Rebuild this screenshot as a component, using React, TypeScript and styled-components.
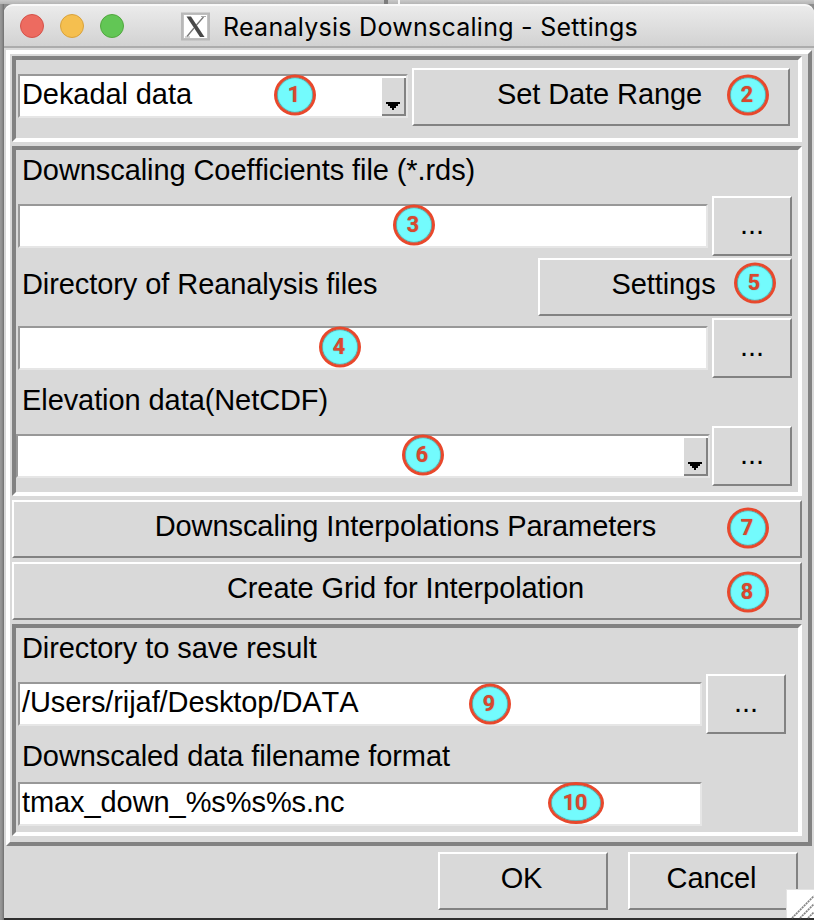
import React from "react";
import styled, { createGlobalStyle, css } from "styled-components";

const GlobalStyle = createGlobalStyle`
  * { box-sizing: border-box; }
  html, body { margin: 0; padding: 0; background: #8d8d8d; overflow: hidden; }
`;

const Desktop = styled.div`
  width: 814px;
  height: 920px;
  padding: 4px 0 0 4px;
  overflow: hidden;
  background:
    linear-gradient(#7d7d7d, #7d7d7d) 384px 0 / 4px 4px no-repeat,
    linear-gradient(#f6f6f6, #f6f6f6) 398px 0 / 2px 4px no-repeat,
    linear-gradient(#c9c9c9, #b4b4b4) 0 0 / 814px 4px no-repeat,
    linear-gradient(#2e2e2e, #2e2e2e) 4px 918px / 810px 2px no-repeat,
    linear-gradient(90deg, #999 0, #8e8e8e 2px, #6f6f6f 4px) 0 0 / 4px 920px no-repeat;
  font-family: "Liberation Sans", Arial, Helvetica, sans-serif;
  font-size: 29px;
  font-kerning: none;
  letter-spacing: -0.08px;
  line-height: 40px;
  color: #000;
`;

const Window = styled.div`
  position: relative;
  width: 810px;
  height: 914px;
  background: #d9d9d9;
  border-radius: 9px 9px 0 0;
`;

const TitleBar = styled.header`
  display: flex;
  align-items: center;
  height: 44px;
  padding-left: 16px;
  border-radius: 9px 9px 0 0;
  border-top: 2px solid #f8f8f8;
  border-bottom: 2px solid #acacac;
  background: linear-gradient(#ebebeb, #d2d2d2);
`;

const Lights = styled.div`
  display: flex;
  gap: 16px;
  width: 161px;
`;

const Light = styled.span<{ $fill: string; $edge: string }>`
  width: 24px;
  height: 24px;
  border-radius: 50%;
  background: ${(p) => p.$fill};
  border: 1.5px solid ${(p) => p.$edge};
`;

const Title = styled.h1`
  margin: 2px 0 0 13px;
  font: 400 25px/40px Inter, sans-serif;
  font-kerning: normal;
  letter-spacing: 0.27px;
  white-space: nowrap;
`;

const raised = css`
  border: solid;
  border-color: #fff #828282 #828282 #fff;
`;

const MainFrame = styled.main`
  ${raised}
  border-width: 4px;
  width: 806px;
  height: 796px;
  margin: 2px 2px 0;
  padding: 2px 6px 6px 2px;
  display: flex;
  flex-direction: column;
  gap: 4px;
`;

const Group = styled.section<{ $height: number }>`
  height: ${(p) => p.$height}px;
  border: 4px solid;
  border-color: #828282 #fff #fff #828282;
`;

const Row = styled.div<{ $top?: number; $indent?: number; $gap?: number }>`
  display: flex;
  align-items: flex-start;
  margin-top: ${(p) => p.$top ?? 0}px;
  padding-left: ${(p) => p.$indent ?? 2}px;
  gap: ${(p) => p.$gap ?? 4}px;
`;

const Label = styled.div<{ $top?: number; $width?: number }>`
  height: 40px;
  width: ${(p) => (p.$width ? `${p.$width}px` : "auto")};
  margin-top: ${(p) => p.$top ?? 0}px;
  padding-left: 6px;
  white-space: nowrap;
`;

const InlineLabel = styled(Label)`
  padding-left: 4px;
  margin-top: 6px;
`;

const Entry = styled.div<{ $width: number; $top?: number }>`
  position: relative;
  display: flex;
  justify-content: space-between;
  width: ${(p) => p.$width}px;
  height: 44px;
  margin-top: ${(p) => p.$top ?? 8}px;
  padding-left: 2px;
  border: 2px solid;
  border-color: #989898 #e6e6e6 #e6e6e6 #989898;
  background: #fff;
  line-height: 36px;
  white-space: nowrap;
`;

const ComboArrow = styled.span`
  width: 24px;
  height: 38px;
  margin-top: 2px;
  border-right: 2px solid #828282;
  border-bottom: 2px solid #828282;
  background: #d9d9d9;
  display: flex;
  align-items: flex-end;
  padding: 0 0 4px 4px;
`;

const Button = styled.button<{ $width?: number; $height?: number }>`
  ${raised}
  border-width: 2px;
  position: relative;
  flex: none;
  width: ${(p) => (p.$width ? `${p.$width}px` : "100%")};
  height: ${(p) => p.$height ?? 58}px;
  margin: 0;
  padding: ${(p) => (p.$height === 60 ? "0 0 4px" : "0 3px 6px 0")};
  background: #d9d9d9;
  color: inherit;
  font: inherit;
  font-kerning: none;
  letter-spacing: inherit;
  white-space: nowrap;
`;

const Marker = styled.span<{ $x: number; $y: number; $wide?: boolean }>`
  position: absolute;
  left: ${(p) => p.$x}px;
  top: ${(p) => p.$y}px;
  transform: translate(-50%, -50%);
  display: flex;
  align-items: center;
  justify-content: center;
  width: ${(p) => (p.$wide ? 56 : 42)}px;
  height: ${(p) => (p.$wide ? 42 : 41)}px;
  padding: 0 2px 1px 0;
  border: 3px solid #e8482c;
  border-radius: 50%;
  background: #73fbfd;
  box-shadow: inset 0 0 1px 0.5px #48706c;
  color: #d9482f;
  font-family: Roboto, sans-serif;
  font-size: 21.5px;
  font-weight: 700;
  letter-spacing: 0;
  line-height: 22px;
  text-shadow: 0 0 1px #80706a;
`;

const Footer = styled.footer`
  display: flex;
  justify-content: flex-end;
  gap: 20px;
  margin-top: 6px;
  padding-right: 16px;
`;

const Grip = styled.div`
  position: absolute;
  right: 0;
  bottom: 0;
  width: 28px;
  height: 29px;
  background: #fff;
  border-top: 1px solid #e4e4e4;
  border-left: 1px solid #e4e4e4;
`;

function XIcon() {
  return (
    <svg width="29" height="30" viewBox="0 0 29 30">
      <rect x="1" y="2.5" width="27" height="26" fill="#c4c4c4" stroke="#b8b8b8" strokeWidth="2" />
      <rect x="3" y="4" width="23" height="23" fill="#fff" />
      <path d="M22.5 6 L15.5 14 M13 17 L6 25.5" stroke="#777" strokeWidth="1.3" fill="none" />
      <path d="M5.5 5.5 H10 L23.5 26 H19 Z" fill="#484848" />
      <path d="M4 26 H9 M20 5.5 H25" stroke="#aaa" strokeWidth="1" />
    </svg>
  );
}

function Arrow() {
  return (
    <ComboArrow>
      <svg width="14" height="8" viewBox="0 0 14 8" shapeRendering="crispEdges">
        <path d="M0 0H14V2H12V4H10V6H8V8H6V6H4V4H2V2H0Z" fill="#000" />
      </svg>
    </ComboArrow>
  );
}

function GripLines() {
  return (
    <Grip>
      <svg width="27" height="28" viewBox="0 0 27 28">
        <path d="M5 26L27 4M13 26L27 12M21 26L27 20" stroke="#858585" strokeWidth="1.7" strokeDasharray="2.1 0.7" />
      </svg>
    </Grip>
  );
}

export default function App() {
  return (
    <>
      <GlobalStyle />
      <Desktop>
        <Window>
          <TitleBar>
            <Lights>
              <Light $fill="#ed6b60" $edge="#d5524a" />
              <Light $fill="#f5bf4f" $edge="#d9a23c" />
              <Light $fill="#62c655" $edge="#51a73e" />
            </Lights>
            <XIcon />
            <Title>Reanalysis Downscaling - Settings</Title>
          </TitleBar>

          <MainFrame>
            <Group $height={86}>
              <Row $top={8}>
                <Entry $width={390} $top={6}>
                  Dekadal data
                  <Arrow />
                  <Marker $x={275} $y={19}>1</Marker>
                </Entry>
                <Button $width={378}>
                  <span>Set Date Range</span>
                  <Marker $x={334} $y={25}>2</Marker>
                </Button>
              </Row>
            </Group>

            <Group $height={350}>
              <Label>Downscaling Coefficients file (*.rds)</Label>
              <Row $top={6}>
                <Entry $width={690}>
                  <Marker $x={394} $y={19}>3</Marker>
                </Entry>
                <Button $width={80} $height={60}>...</Button>
              </Row>
              <Row $top={2} $gap={0}>
                <InlineLabel $width={520}>Directory of Reanalysis files</InlineLabel>
                <Button $width={254}>
                  Settings
                  <Marker $x={215} $y={23}>5</Marker>
                </Button>
              </Row>
              <Row $top={2}>
                <Entry $width={690}>
                  <Marker $x={320} $y={19}>4</Marker>
                </Entry>
                <Button $width={80} $height={60}>...</Button>
              </Row>
              <Label $top={2}>Elevation data(NetCDF)</Label>
              <Row $top={6} $indent={0} $gap={2}>
                <Entry $width={694}>
                  <span />
                  <Arrow />
                  <Marker $x={405} $y={19}>6</Marker>
                </Entry>
                <Button $width={80} $height={60}>...</Button>
              </Row>
            </Group>

            <Button>
              Downscaling Interpolations Parameters
              <Marker $x={734} $y={26}>7</Marker>
            </Button>
            <Button>
              Create Grid for Interpolation
              <Marker $x={734} $y={28}>8</Marker>
            </Button>

            <Group $height={212}>
              <Label>Directory to save result</Label>
              <Row $top={6}>
                <Entry $width={684}>
                  /Users/rijaf/Desktop/DATA
                  <Marker $x={470} $y={20}>9</Marker>
                </Entry>
                <Button $width={80} $height={60}>...</Button>
              </Row>
              <Label $top={2}>Downscaled data filename format</Label>
              <Row $top={6}>
                <Entry $width={684} $top={0}>
                  tmax_down_%s%s%s.nc
                  <Marker $x={556} $y={19} $wide>10</Marker>
                </Entry>
              </Row>
            </Group>
          </MainFrame>

          <Footer>
            <Button $width={170}>OK</Button>
            <Button $width={170}>Cancel</Button>
          </Footer>
          <GripLines />
        </Window>
      </Desktop>
    </>
  );
}
